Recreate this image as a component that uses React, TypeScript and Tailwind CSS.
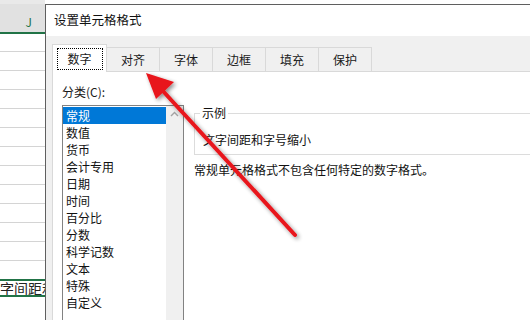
const categories = [
  "常规",
  "数值",
  "货币",
  "会计专用",
  "日期",
  "时间",
  "百分比",
  "分数",
  "科学记数",
  "文本",
  "特殊",
  "自定义",
];

const tabs = ["数字", "对齐", "字体", "边框", "填充", "保护"];

function SheetStrip() {
  return (
    <div className="flex w-[45px] shrink-0 flex-col overflow-hidden bg-white">
      <div className="h-[4px] shrink-0 bg-[#e9e9e9]" />
      <div className="flex h-[28px] shrink-0 items-end justify-end bg-[#e1e1e1] pb-[2px] pr-[13px] text-[12px] leading-[16px] text-[#217346]">
        J
      </div>
      <div className="h-[2px] shrink-0 bg-[#217346]" />
      <div className="h-[18px] shrink-0 border-b border-[#d4d4d4]" />
      {Array.from({ length: 12 }).map((_, i) => (
        <div key={i} className="h-[19px] shrink-0 border-b border-[#d4d4d4]" />
      ))}
      <div className="-mt-px flex h-[18px] shrink-0 items-center overflow-hidden whitespace-nowrap border-y-2 border-[#217346] text-[14px] leading-[14px] text-[#222]">
        <span>字间距和</span>
      </div>
    </div>
  );
}

function Tabs() {
  return (
    <div className="flex h-[28px] shrink-0 items-end pl-[6px]">
      {tabs.map((t, i) =>
        i === 0 ? (
          <div
            key={t}
            className="relative z-10 flex h-[28px] w-[55px] items-center justify-center border-x border-t border-[#d9d9d9] bg-white"
          >
            <span className="flex h-[22px] w-[46px] items-center justify-center border border-dotted border-black">
              {t}
            </span>
          </div>
        ) : (
          <div
            key={t}
            className="-ml-px flex h-[25px] w-[54px] items-center justify-center border border-b-0 border-[#d9d9d9] bg-[#f0f0f0]"
          >
            {t}
          </div>
        ),
      )}
    </div>
  );
}

function CategoryList() {
  return (
    <div className="flex h-[240px] w-[122px] border border-[#828282] bg-white">
      <div className="flex-1 pt-px">
        {categories.map((c, i) => (
          <div
            key={c}
            className={
              i === 0
                ? "h-[17px] bg-[#0078d7] pl-[3px] leading-[17px] text-white"
                : "h-[17px] pl-[3px] leading-[17px] text-[#111]"
            }
          >
            {c}
          </div>
        ))}
      </div>
      <div className="flex w-[17px] justify-center bg-[#f0f0f0] pt-[5px]">
        <svg width="9" height="6" viewBox="0 0 9 6" fill="none">
          <path d="M1 5 L4.5 1.5 L8 5" stroke="#a3a3a3" strokeWidth="1.4" />
        </svg>
      </div>
    </div>
  );
}

function RedArrow() {
  return (
    <svg
      className="pointer-events-none absolute left-0 top-0"
      width="530"
      height="320"
      viewBox="0 0 530 320"
    >
      <defs>
        <filter id="sh" x="-20%" y="-20%" width="140%" height="140%">
          <feGaussianBlur in="SourceAlpha" stdDeviation="2" />
          <feOffset dx="2" dy="2" result="b" />
          <feComponentTransfer>
            <feFuncA type="linear" slope="0.45" />
          </feComponentTransfer>
          <feMerge>
            <feMergeNode />
            <feMergeNode in="SourceGraphic" />
          </feMerge>
        </filter>
      </defs>
      <g filter="url(#sh)">
        <line
          x1="162"
          y1="90"
          x2="295"
          y2="235"
          stroke="#e8141b"
          strokeWidth="4"
          strokeLinecap="round"
        />
        <polygon points="146,73 174,82 156,99" fill="#e8141b" />
      </g>
    </svg>
  );
}

export default function App() {
  return (
    <div
      className="relative flex h-[320px] w-[530px] overflow-hidden bg-white text-[12px] text-[#1a1a1a]"
      style={{ fontFamily: '"Microsoft YaHei", "Noto Sans CJK SC", sans-serif' }}
    >
      <SheetStrip />
      <div className="mt-[4px] flex min-h-0 flex-1 flex-col overflow-hidden border-l border-t border-[#5f5f5f] bg-[#f0f0f0]">
        <div className="flex h-[31px] shrink-0 items-center bg-white pl-[8px] text-[12.5px] text-[#111]">
          设置单元格格式
        </div>
        <div className="h-[8px] shrink-0" />
        <Tabs />
        <div className="-mt-px ml-[6px] flex min-h-0 flex-1 border-l border-t border-[#d9d9d9] bg-white pl-[8px] pt-[12px]">
          <div className="flex shrink-0 flex-col">
            <div className="h-[16px] pl-[1px] leading-[16px]">分类(C):</div>
            <div className="mt-[5px] ml-px">
              <CategoryList />
            </div>
          </div>
          <div className="flex flex-1 flex-col pl-[10px] pt-[29px]">
            <div className="-mr-[10px] flex h-[42px] shrink-0 flex-col items-start border border-[#dcdcdc] px-[8px]">
              <span className="-mt-[8px] -ml-[3px] bg-white px-[2px] leading-[14px] text-[#111]">示例</span>
              <div className="mt-[12px] leading-[16px] text-[#111]">文字间距和字号缩小</div>
            </div>
            <div className="mt-[7px] leading-[16px] text-[#111]">
              常规单元格格式不包含任何特定的数字格式。
            </div>
          </div>
        </div>
      </div>
      <RedArrow />
    </div>
  );
}
